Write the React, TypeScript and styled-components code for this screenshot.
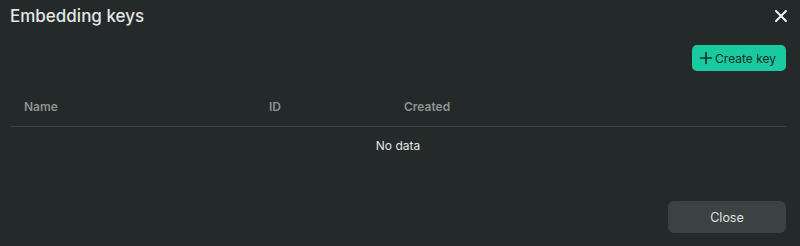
import styled, { createGlobalStyle } from "styled-components";

const GlobalStyle = createGlobalStyle`
  html, body {
    margin: 0;
    padding: 0;
    background: #232a29;
  }
  body {
    font-family: Inter, "Noto Sans", sans-serif;
  }
`;

const StyledModal = styled.div`
  width: 800px;
  height: 246px;
  box-sizing: border-box;
  padding: 0 14px 13px 10px;
  background-color: #232a29;
  display: flex;
  flex-direction: column;
  color: #e4e6e5;
`;
const StyledHeader = styled.div`
  height: 32px;
  display: flex;
  align-items: center;
  justify-content: space-between;
`;
const StyledTitle = styled.h2`
  margin: 0;
  font-size: 17px;
  font-weight: 500;
  color: #e4e6e5;
`;
const StyledIconButton = styled.button`
  background: none;
  border: none;
  padding: 0;
  margin-right: -3px;
  display: flex;
  cursor: pointer;
  color: #f2f2f2;
`;
const StyledToolbar = styled.div`
  display: flex;
  justify-content: flex-end;
  margin-top: 13px;
`;
const StyledPrimaryButton = styled.button`
  height: 26px;
  padding: 0 10px 0 7px;
  border: none;
  border-radius: 5px;
  background-color: #19c9a0;
  color: #12302a;
  font-family: inherit;
  font-size: 12px;
  display: flex;
  align-items: center;
  gap: 2px;
  cursor: pointer;
`;
const StyledTable = styled.div`
  margin-top: 22px;
  display: flex;
  flex-direction: column;
`;
const StyledHeadRow = styled.div`
  display: grid;
  grid-template-columns: 245px 135px 1fr;
  height: 34px;
  box-sizing: border-box;
  padding: 0 0 6px 14px;
  align-items: center;
  border-bottom: 1px solid #3c4543;
`;
const StyledHeadCell = styled.div`
  font-size: 12px;
  font-weight: 600;
  color: #8c9391;
`;
const StyledEmpty = styled.div`
  height: 36px;
  display: flex;
  align-items: center;
  justify-content: center;
  font-size: 12px;
  color: #e4e6e5;
`;
const StyledFooter = styled.div`
  margin-top: auto;
  display: flex;
  justify-content: flex-end;
`;
const StyledSecondaryButton = styled.button`
  width: 118px;
  height: 32px;
  border: none;
  border-radius: 6px;
  background-color: #3a4341;
  color: #dfe2e1;
  font-family: inherit;
  font-size: 12.5px;
  cursor: pointer;
`;

export default function App() {
  const columns = ["Name", "ID", "Created"];
  return (
    <>
      <GlobalStyle />
      <StyledModal>
        <StyledHeader>
          <StyledTitle>Embedding keys</StyledTitle>
          <StyledIconButton aria-label="Close">
            <svg width="16" height="16" viewBox="0 0 16 16">
              <path
                d="M3 3L13 13M13 3L3 13"
                stroke="currentColor"
                strokeWidth="2"
                strokeLinecap="round"
              />
            </svg>
          </StyledIconButton>
        </StyledHeader>
        <StyledToolbar>
          <StyledPrimaryButton>
            <svg width="14" height="14" viewBox="0 0 14 14">
              <path
                d="M7 1.5V12.5M1.5 7H12.5"
                stroke="currentColor"
                strokeWidth="1.6"
                strokeLinecap="round"
              />
            </svg>
            Create key
          </StyledPrimaryButton>
        </StyledToolbar>
        <StyledTable>
          <StyledHeadRow>
            {columns.map((c) => (
              <StyledHeadCell key={c}>{c}</StyledHeadCell>
            ))}
          </StyledHeadRow>
          <StyledEmpty>No data</StyledEmpty>
        </StyledTable>
        <StyledFooter>
          <StyledSecondaryButton>Close</StyledSecondaryButton>
        </StyledFooter>
      </StyledModal>
    </>
  );
}
